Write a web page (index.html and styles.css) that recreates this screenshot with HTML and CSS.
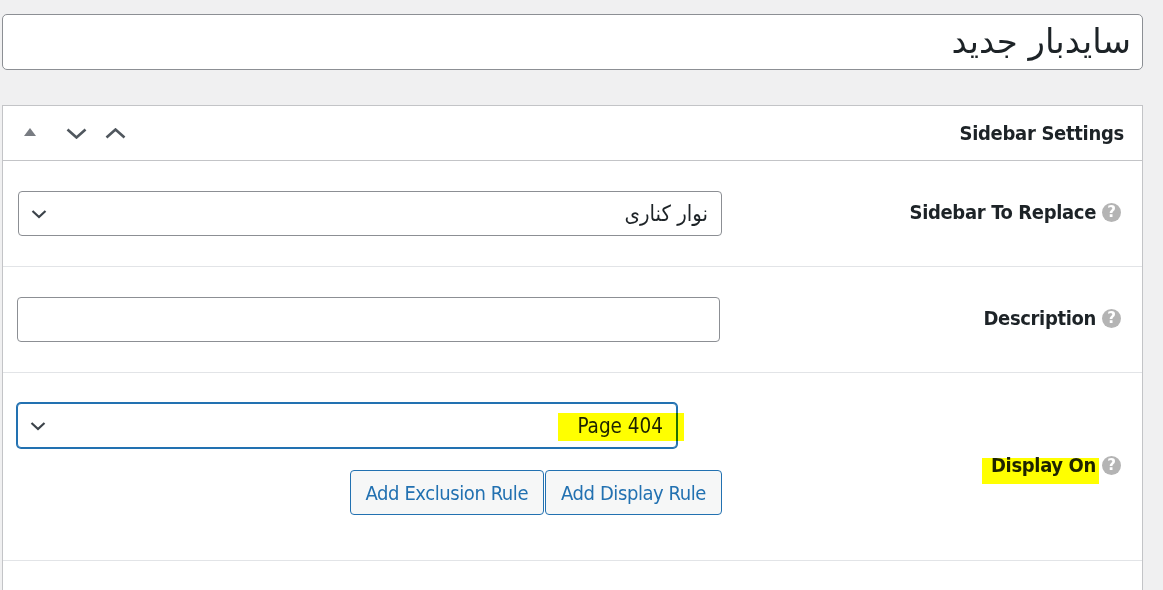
FILE: index.html
```html
<!DOCTYPE html>
<html lang="fa">
<head>
<meta charset="utf-8">
<title>Sidebar</title>
<link rel="stylesheet" href="styles.css">
</head>
<body>
<div class="wrap">
  <div class="title-box" dir="rtl">سایدبار جدید</div>

  <div class="postbox">
    <div class="postbox-header">
      <div class="handle-actions">
        <span class="handle handle-toggle">
          <svg width="12" height="8" viewBox="0 0 12 8"><polygon points="0,8 6,0 12,8" fill="#787c82"/></svg>
        </span>
        <span class="handle handle-down">
          <svg width="21" height="11" viewBox="0 0 21 11"><polyline points="1.5,1.5 10.5,9.5 19.5,1.5" fill="none" stroke="#50575e" stroke-width="2.6"/></svg>
        </span>
        <span class="handle handle-up">
          <svg width="21" height="11" viewBox="0 0 21 11"><polyline points="1.5,9.5 10.5,1.5 19.5,9.5" fill="none" stroke="#50575e" stroke-width="2.6"/></svg>
        </span>
      </div>
      <h2 class="postbox-title">Sidebar Settings</h2>
    </div>

    <div class="row">
      <div class="field">
        <div class="select">
          <svg class="select-arrow" width="16" height="10" viewBox="0 0 16 10"><polyline points="1.5,2 8,8 14.5,2" fill="none" stroke="#3c434a" stroke-width="2.2"/></svg>
          <span class="select-value select-value-fa" dir="rtl">نوار کناری</span>
        </div>
      </div>
      <div class="label">
        <span class="label-text">Sidebar To Replace</span>
        <span class="help">?</span>
      </div>
    </div>

    <div class="row">
      <div class="field">
        <div class="text-input"></div>
      </div>
      <div class="label">
        <span class="label-text">Description</span>
        <span class="help">?</span>
      </div>
    </div>

    <div class="row">
      <div class="field">
        <div class="select select-focus">
          <svg class="select-arrow" width="16" height="10" viewBox="0 0 16 10"><polyline points="1.5,2 8,8 14.5,2" fill="none" stroke="#3c434a" stroke-width="2.2"/></svg>
          <span class="select-value marked marked-page">Page 404</span>
        </div>
        <div class="rule-buttons">
          <button class="button">Add Exclusion Rule</button>
          <button class="button">Add Display Rule</button>
        </div>
      </div>
      <div class="label">
        <span class="label-text marked marked-label">Display On</span>
        <span class="help">?</span>
      </div>
    </div>

    <div class="row row-last"></div>
  </div>
</div>
</body>
</html>
```

FILE: styles.css
```css
* {
  box-sizing: border-box;
}

html, body {
  margin: 0;
  padding: 0;
  background: #f0f0f1;
  font-family: "DejaVu Sans Condensed", "DejaVu Sans", sans-serif;
  font-stretch: condensed;
  color: #1d2327;
  overflow: hidden;
}

.wrap {
  padding: 14px 20px 0 2px;
}

.title-box {
  height: 56px;
  background: #fff;
  border: 1px solid #8c8f94;
  border-radius: 5px;
  font-family: "DejaVu Sans", sans-serif;
  font-stretch: normal;
  font-size: 34px;
  line-height: 52px;
  padding: 0 11px;
  color: #1d2327;
}

.postbox {
  margin-top: 35px;
  background: #fff;
  border: 1px solid #c3c4c7;
}

.postbox-header {
  display: flex;
  align-items: center;
  justify-content: space-between;
  height: 55px;
  border-bottom: 1px solid #c3c4c7;
}

.handle-actions {
  display: flex;
  align-items: center;
  padding-left: 21px;
}

.handle {
  display: flex;
  align-items: center;
}

.handle svg {
  display: block;
}

.handle-toggle {
  margin-top: -2px;
}

.handle-down {
  margin-left: 30px;
}

.handle-up {
  margin-left: 18px;
}

.postbox-title {
  margin: 0;
  padding-right: 18px;
  font-size: 20px;
  line-height: 24px;
  letter-spacing: -0.3px;
  font-weight: bold;
}

.row {
  display: flex;
  border-bottom: 1px solid #e2e4e7;
}

.row-last {
  height: 29px;
  border-bottom: none;
}

.field {
  width: 740px;
  padding: 30px 0 30px 15px;
}

.select,
.text-input {
  position: relative;
  display: flex;
  align-items: center;
  justify-content: space-between;
  width: 704px;
  height: 45px;
  background: #fff;
  border: 1px solid #8c8f94;
  border-radius: 4px;
  padding: 0 13px 0 12px;
}

.text-input {
  width: 703px;
  margin-left: -1px;
}

.select-focus {
  width: 660px;
  margin-left: -1px;
  border-color: #2271b1;
  box-shadow: 0 0 0 1px #2271b1;
}

.select-arrow {
  display: block;
  flex: none;
}

.select-value {
  font-size: 20.5px;
  line-height: 24px;
  color: #1d2327;
}

.select-value-fa {
  font-size: 22px;
}

.rule-buttons {
  display: flex;
  justify-content: flex-end;
  width: 704px;
  margin-top: 22px;
  margin-bottom: 15px;
}

.button {
  height: 45px;
  padding: 0 15px;
  background: #f6f7f7;
  border: 1px solid #2271b1;
  border-radius: 4px;
  color: #2271b1;
  font-family: inherit;
  font-stretch: condensed;
  font-size: 20px;
  letter-spacing: -0.42px;
  cursor: pointer;
}

.button + .button {
  margin-left: 1px;
}

.label {
  flex: 1;
  display: flex;
  align-items: center;
  justify-content: flex-end;
  gap: 6px;
  padding-right: 21px;
}

.label-text {
  font-size: 20px;
  line-height: 24px;
  letter-spacing: -0.35px;
  font-weight: bold;
  margin-top: -3px;
}

.help {
  display: flex;
  align-items: center;
  justify-content: center;
  width: 19px;
  height: 19px;
  border-radius: 50%;
  background: #b4b4b4;
  color: #fff;
  font-family: "DejaVu Sans", sans-serif;
  font-stretch: normal;
  font-size: 15px;
  font-weight: bold;
  margin-top: -3px;
}

.marked {
  position: relative;
}

.marked::after {
  content: "";
  position: absolute;
  background: #ffff00;
  mix-blend-mode: multiply;
}

.marked-page::after {
  left: -19px;
  right: -21px;
  top: -1px;
  bottom: -3px;
}

.marked-label::after {
  left: -9px;
  right: -3px;
  top: 5px;
  bottom: -7px;
}
```
